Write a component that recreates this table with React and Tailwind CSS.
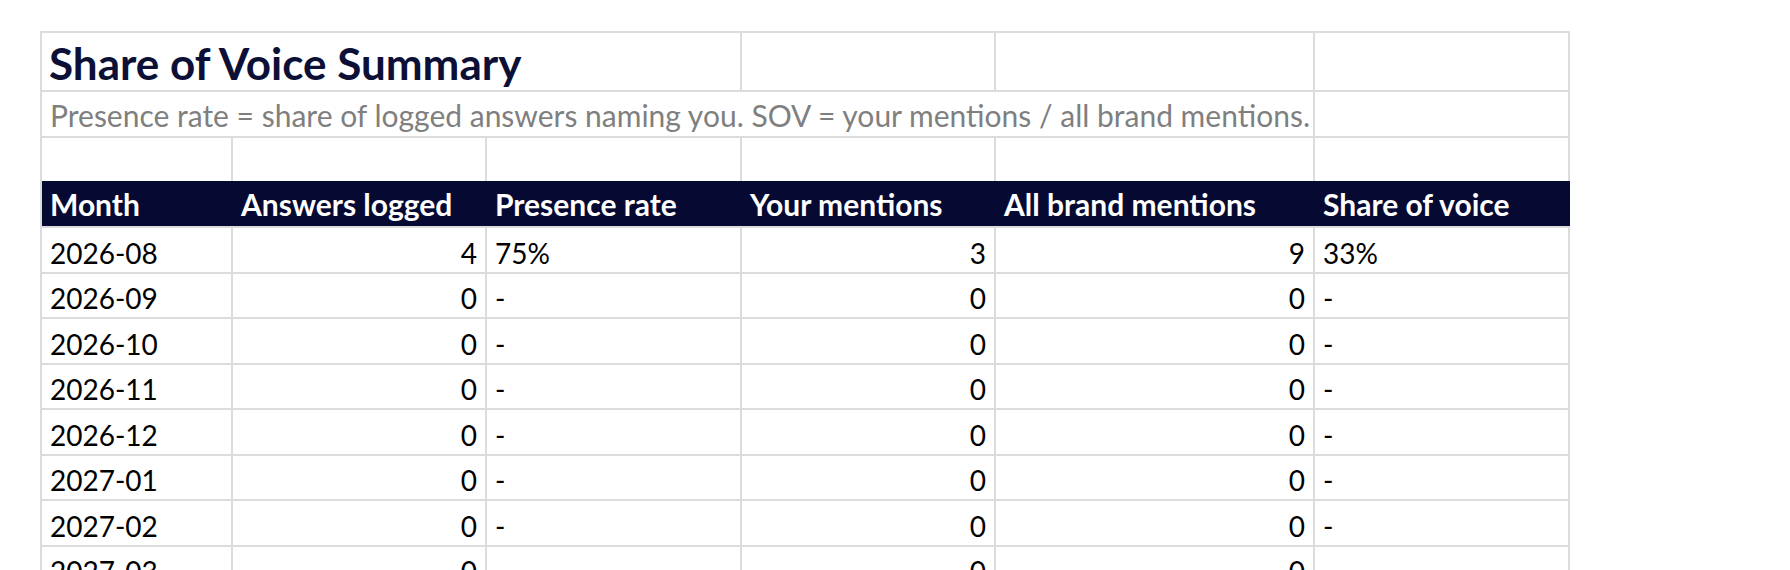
import React from "react";

const cols = ["w-[191px]", "w-[254px]", "w-[255px]", "w-[254px]", "w-[319px]", "w-[255px]"];

const headers = ["Month", "Answers logged", "Presence rate", "Your mentions", "All brand mentions", "Share of voice"];

const rows = [
  ["2026-08", "4", "75%", "3", "9", "33%"],
  ["2026-09", "0", "-", "0", "0", "-"],
  ["2026-10", "0", "-", "0", "0", "-"],
  ["2026-11", "0", "-", "0", "0", "-"],
  ["2026-12", "0", "-", "0", "0", "-"],
  ["2027-01", "0", "-", "0", "0", "-"],
  ["2027-02", "0", "-", "0", "0", "-"],
  ["2027-03", "0", "-", "0", "0", "-"],
];

// right aligned columns (numbers)
const numCols = [1, 3, 4];

const App = () => {
  return (
    <div className="min-h-[570px] bg-white pl-[40px] pt-[31px] font-['Lato',sans-serif] text-black">
      <div className="w-[1530px] border-l-2 border-t-2 border-[#dcdcdc]">
        {/* title row */}
        <div className="flex h-[59px]">
          <div className="flex w-[700px] items-end whitespace-nowrap border-b-2 border-r-2 border-[#dcdcdc] pb-[5px] pl-[7px] text-[44px] font-bold leading-none text-[#0c1036]">
            Share of Voice Summary
          </div>
          <div className={cols[3] + " border-b-2 border-r-2 border-[#dcdcdc]"} />
          <div className={cols[4] + " border-b-2 border-r-2 border-[#dcdcdc]"} />
          <div className={cols[5] + " border-b-2 border-r-2 border-[#dcdcdc]"} />
        </div>

        {/* note row */}
        <div className="flex h-[46px]">
          <div className="flex w-[1273px] items-end whitespace-nowrap border-b-2 border-r-2 border-[#dcdcdc] pb-[6px] pl-[8px] text-[30px] leading-none text-[#7f7f7f]">
            Presence rate = share of logged answers naming you. SOV = your mentions / all brand mentions.
          </div>
          <div className={cols[5] + " border-b-2 border-r-2 border-[#dcdcdc]"} />
        </div>

        {/* blank row */}
        <div className="flex h-[43px]">
          {cols.map((c, i) => (
            <div key={i} className={c + " border-r-2 border-[#dcdcdc]"} />
          ))}
        </div>

        {/* header */}
        <div className="flex h-[47px] border-b-2 border-[#dcdcdc] bg-[#060a32]">
          {headers.map((h, i) => (
            <div key={i} className={c(i) + " flex items-end whitespace-nowrap pb-[7px] pl-[8px] text-[30px] font-bold leading-none text-white"}>
              {h}
            </div>
          ))}
        </div>

        {rows.map((r, ri) => (
          <div key={ri} className="flex h-[45.5px]">
            {r.map((v, i) => (
              <div
                key={i}
                className={
                  c(i) +
                  " flex items-end border-b-2 border-r-2 border-[#dcdcdc] pb-[5px] text-[28px] leading-none " +
                  (numCols.includes(i) ? "justify-end pr-[8px]" : "pl-[8px]")
                }
              >
                {v}
              </div>
            ))}
          </div>
        ))}
      </div>
    </div>
  );
};

function c(i) {
  return cols[i] + " shrink-0";
}

export default App;
